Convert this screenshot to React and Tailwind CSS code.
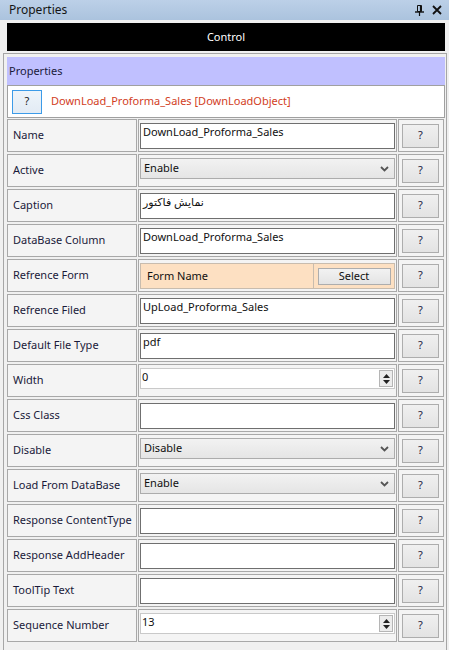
import React from "react";

const font = { fontFamily: '"Noto Sans", "DejaVu Sans", sans-serif' };

function QBtn() {
  return (
    <div className="w-[37px] h-[24px] border border-[#adadad] bg-gradient-to-b from-[#f0f0f0] to-[#e3e3e3] flex items-center justify-center text-[11px] text-[#202040]">
      ?
    </div>
  );
}

function TextBox({ value }) {
  return (
    <div className="h-[26px] w-full border border-[#6f6f6f] bg-white px-[2px] text-[11px] leading-[15px] text-[#101010] overflow-hidden whitespace-nowrap">
      {value}
    </div>
  );
}

function SelectBox({ value }) {
  return (
    <div className="h-[21px] w-full border border-[#acacac] bg-gradient-to-b from-[#f2f2f2] to-[#e5e5e5] flex items-center justify-between pl-[3px] pr-[5px] text-[11px] text-[#101010]">
      <span>{value}</span>
      <svg width="9" height="6" viewBox="0 0 9 6">
        <path d="M1 1 L4.5 4.5 L8 1" stroke="#555" strokeWidth="1.8" fill="none" />
      </svg>
    </div>
  );
}

function NumberBox({ value }) {
  return (
    <div className="h-[21px] w-full border border-[#c9c9c9] bg-white flex items-center justify-between pl-[1px] pr-[1px] text-[11px] text-[#101010]">
      <span className="leading-[14px] self-start pt-[1px]">{value}</span>
      <div className="w-[14px] h-[17px] border border-[#b5b5b5] bg-[#ececec] flex flex-col items-center justify-center gap-[2px]">
        <svg width="7" height="4" viewBox="0 0 7 4"><path d="M0 4 L3.5 0 L7 4 Z" fill="#222" /></svg>
        <svg width="7" height="4" viewBox="0 0 7 4"><path d="M0 0 L3.5 4 L7 0 Z" fill="#222" /></svg>
      </div>
    </div>
  );
}

function RefForm() {
  return (
    <div className="h-[26px] w-full border border-[#c8bcae] bg-[#fde0c2] flex items-stretch text-[11px] text-[#101010]">
      <div className="flex-1 flex items-center pl-[6px]">Form Name</div>
      <div className="w-[81px] border-l border-[#c8bcae] flex items-center justify-center">
        <div className="w-[73px] h-[17px] border border-[#adadad] bg-gradient-to-b from-[#f2f2f2] to-[#e4e4e4] flex items-center justify-center">
          Select
        </div>
      </div>
    </div>
  );
}

const rows = [
  ["Name", <TextBox value="DownLoad_Proforma_Sales" />],
  ["Active", <SelectBox value="Enable" />],
  ["Caption", <TextBox value="نمایش فاکتور" />],
  ["DataBase Column", <TextBox value="DownLoad_Proforma_Sales" />],
  ["Refrence Form", <RefForm />],
  ["Refrence Filed", <TextBox value="UpLoad_Proforma_Sales" />],
  ["Default File Type", <TextBox value="pdf" />],
  ["Width", <NumberBox value="0" />],
  ["Css Class", <TextBox value="" />],
  ["Disable", <SelectBox value="Disable" />],
  ["Load From DataBase", <SelectBox value="Enable" />],
  ["Response ContentType", <TextBox value="" />],
  ["Response AddHeader", <TextBox value="" />],
  ["ToolTip Text", <TextBox value="" />],
  ["Sequence Number", <NumberBox value="13" />],
];

export default function App() {
  return (
    <div className="w-[449px] h-[650px] bg-[#f0f0f0] overflow-hidden" style={font}>
      <div className="h-[20px] bg-gradient-to-b from-[#bcd0e8] to-[#abc3de] flex items-center justify-between pl-[9px] pr-[7px]">
        <span className="text-[12px] text-[#151515] leading-none">Properties</span>
        <div className="flex items-center gap-[8px]">
          <svg width="9" height="11" viewBox="0 0 9 11">
            <path d="M2.5 0.5 H6.5 V6.5 H2.5 Z" stroke="#111" strokeWidth="1" fill="none" />
            <path d="M5.5 0.5 V6.5" stroke="#111" strokeWidth="1.2" />
            <path d="M0 7 H9" stroke="#111" strokeWidth="1.4" />
            <path d="M4.5 7 V11" stroke="#111" strokeWidth="1.2" />
          </svg>
          <svg width="10" height="10" viewBox="0 0 10 10">
            <path d="M1 1 L9 9 M9 1 L1 9" stroke="#111" strokeWidth="1.8" />
          </svg>
        </div>
      </div>
      <div className="mx-[7px] mt-[3px] w-[438px] h-[28px] bg-black text-white flex items-center justify-center text-[11px]">
        Control
      </div>
      <div className="mt-[2px] ml-[3px] w-[444px] h-[600px] border-l border-t border-r border-[#a6a6a6] pl-[3px] pr-[1px] pt-[3px]">
        <div className="h-[28px] bg-[#c0c0ff] flex items-center pl-[2px] text-[11px] text-[#1a1a3a]">Properties</div>
        <div className="h-[33px] border border-[#a0a0a0] bg-white flex items-center pl-[4px]">
          <div className="w-[30px] h-[24px] border border-[#3c9be8] bg-gradient-to-b from-[#eef4fa] to-[#e2ebf4] flex items-center justify-center text-[11px] text-[#202020]">
            ?
          </div>
          <span className="ml-[9px] text-[11px] text-[#d2401e]">DownLoad_Proforma_Sales [DownLoadObject]</span>
        </div>
        <div className="mt-[1px] flex flex-col gap-[2px]">
          {rows.map(([label, ctrl], i) => (
            <div key={i} className="grid grid-cols-[130px_259px_46px] gap-x-[1px]">
              <div className="h-[33px] border border-[#a8a8a8] bg-[#f4f4f4] flex items-center pl-[5px] text-[11px] text-[#1a1a3a] whitespace-nowrap">
                {label}
              </div>
              <div className="h-[33px] border border-[#a8a8a8] bg-[#f4f4f4] pt-[3px] px-[1px]">
                {ctrl}
              </div>
              <div className="h-[33px] border border-[#a8a8a8] bg-[#f4f4f4] flex items-center pl-[3px]">
                <QBtn />
              </div>
            </div>
          ))}
        </div>
      </div>
    </div>
  );
}
